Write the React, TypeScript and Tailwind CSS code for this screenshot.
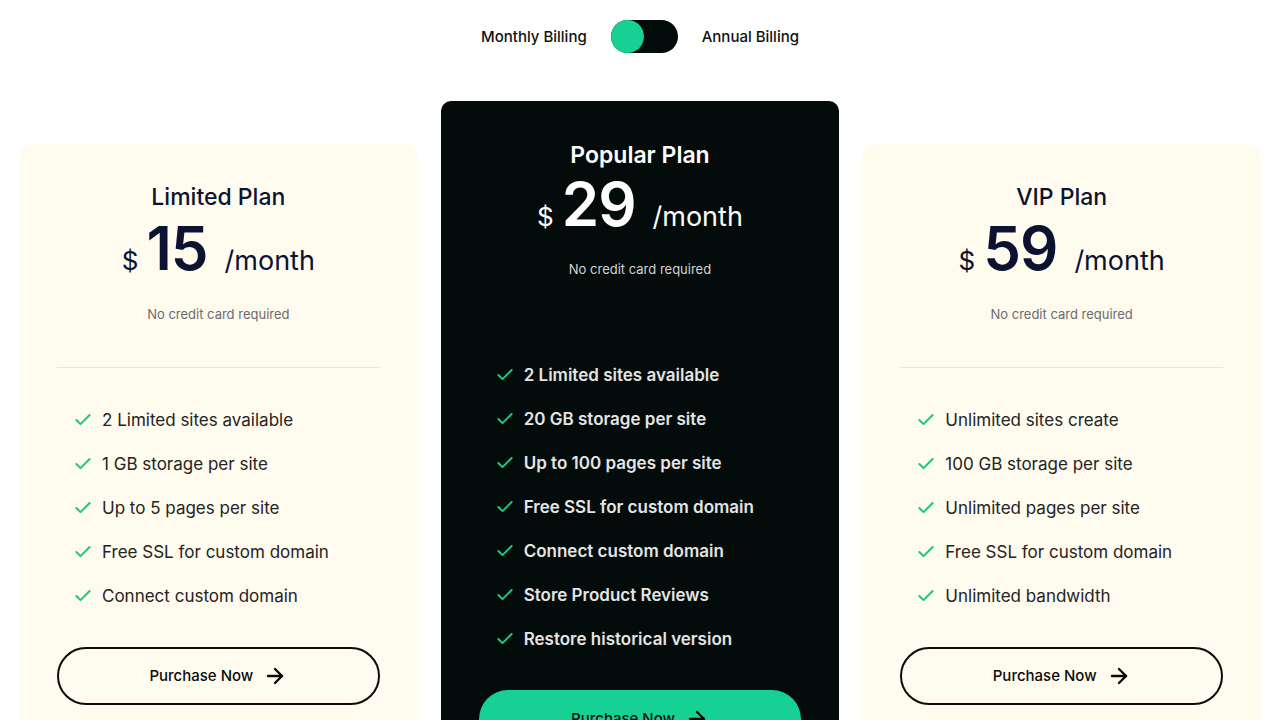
import React from "react";
import { Check, ArrowRight } from "lucide-react";

type Plan = {
  name: string;
  price: string;
  features: string[];
  dark?: boolean;
};

const plans: Plan[] = [
  {
    name: "Limited Plan",
    price: "15",
    features: [
      "2 Limited sites available",
      "1 GB storage per site",
      "Up to 5 pages per site",
      "Free SSL for custom domain",
      "Connect custom domain",
    ],
  },
  {
    name: "Popular Plan",
    price: "29",
    dark: true,
    features: [
      "2 Limited sites available",
      "20 GB storage per site",
      "Up to 100 pages per site",
      "Free SSL for custom domain",
      "Connect custom domain",
      "Store Product Reviews",
      "Restore historical version",
    ],
  },
  {
    name: "VIP Plan",
    price: "59",
    features: [
      "Unlimited sites create",
      "100 GB storage per site",
      "Unlimited pages per site",
      "Free SSL for custom domain",
      "Unlimited bandwidth",
    ],
  },
];

function Card({ plan }: { plan: Plan }) {
  const dark = plan.dark;
  return (
    <div
      className={
        dark
          ? "rounded-[10px] bg-[#030c0a] px-[38px] pt-[38px] pb-[40px]"
          : "mt-[43px] rounded-[14px] bg-[#fffbef] px-[38px] pt-[37px] pb-[40px]"
      }
    >
      <div
        className={
          dark
            ? "text-center text-[23px] leading-[32px] font-semibold text-white"
            : "text-center text-[23px] leading-[32px] font-medium text-[#0c1330]"
        }
      >
        {plan.name}
      </div>
      <div
        className={
          dark
            ? "mt-[3px] flex items-baseline justify-center text-white"
            : "mt-[5px] flex items-baseline justify-center text-[#0c1330]"
        }
      >
        <span className="text-[26px] leading-[60px] mr-[8px]">$</span>
        <span className="text-[60px] leading-[60px] font-semibold tracking-[-1px]">
          {plan.price}
        </span>
        <span className="text-[27px] leading-[60px] ml-[17px]">/month</span>
      </div>
      <div
        className={
          dark
            ? "mt-[12px] text-center text-[13px] leading-[20px] text-[#d4d4d4]"
            : "mt-[13px] text-center text-[13px] leading-[20px] text-[#6b6b6b]"
        }
      >
        No credit card required
      </div>
      <div
        className={
          dark
            ? "mt-[43px] h-px bg-[#030c0a]"
            : "mt-[43px] h-px bg-[#e8e6dc]"
        }
      />
      <ul className="mt-[40px] flex flex-col gap-[20px] px-[16px]">
        {plan.features.map((f) => (
          <li key={f} className="flex items-center gap-[9px] h-[24px]">
            <Check className="w-[20px] h-[20px] text-[#1fc48b]" strokeWidth={2.4} />
            <span
              className={
                dark
                  ? "text-[17px] leading-[24px] font-semibold text-[#e4e4e4]"
                  : "text-[17px] leading-[24px] text-[#232323]"
              }
            >
              {f}
            </span>
          </li>
        ))}
      </ul>
      <button
        className={
          dark
            ? "mt-[39px] flex h-[58px] w-full items-center justify-center gap-[10px] rounded-full bg-[#17d094] text-[15px] font-medium text-[#0b0f0d]"
            : "mt-[39px] flex h-[58px] w-full items-center justify-center gap-[10px] rounded-full border-2 border-[#0b0b0b] text-[15px] font-medium text-[#0b0b0b]"
        }
      >
        Purchase Now
        <ArrowRight className="w-[24px] h-[24px]" strokeWidth={2.4} />
      </button>
    </div>
  );
}

export default function App() {
  return (
    <div className="h-[720px] overflow-hidden bg-white font-['Inter',sans-serif]">
      <div className="flex items-center justify-center gap-[24px] pt-[20px]">
        <span className="pt-[2px] text-[15px] font-medium text-[#111]">Monthly Billing</span>
        <div className="flex h-[33px] w-[67px] items-center rounded-full bg-[#030c0a]">
          <div className="h-[33px] w-[33px] rounded-full bg-[#17d094]" />
        </div>
        <span className="pt-[2px] text-[15px] font-medium text-[#111]">Annual Billing</span>
      </div>
      <div className="mt-[48px] grid grid-cols-3 items-start gap-[23px] px-[19px]">
        {plans.map((p) => (
          <Card key={p.name} plan={p} />
        ))}
      </div>
    </div>
  );
}
